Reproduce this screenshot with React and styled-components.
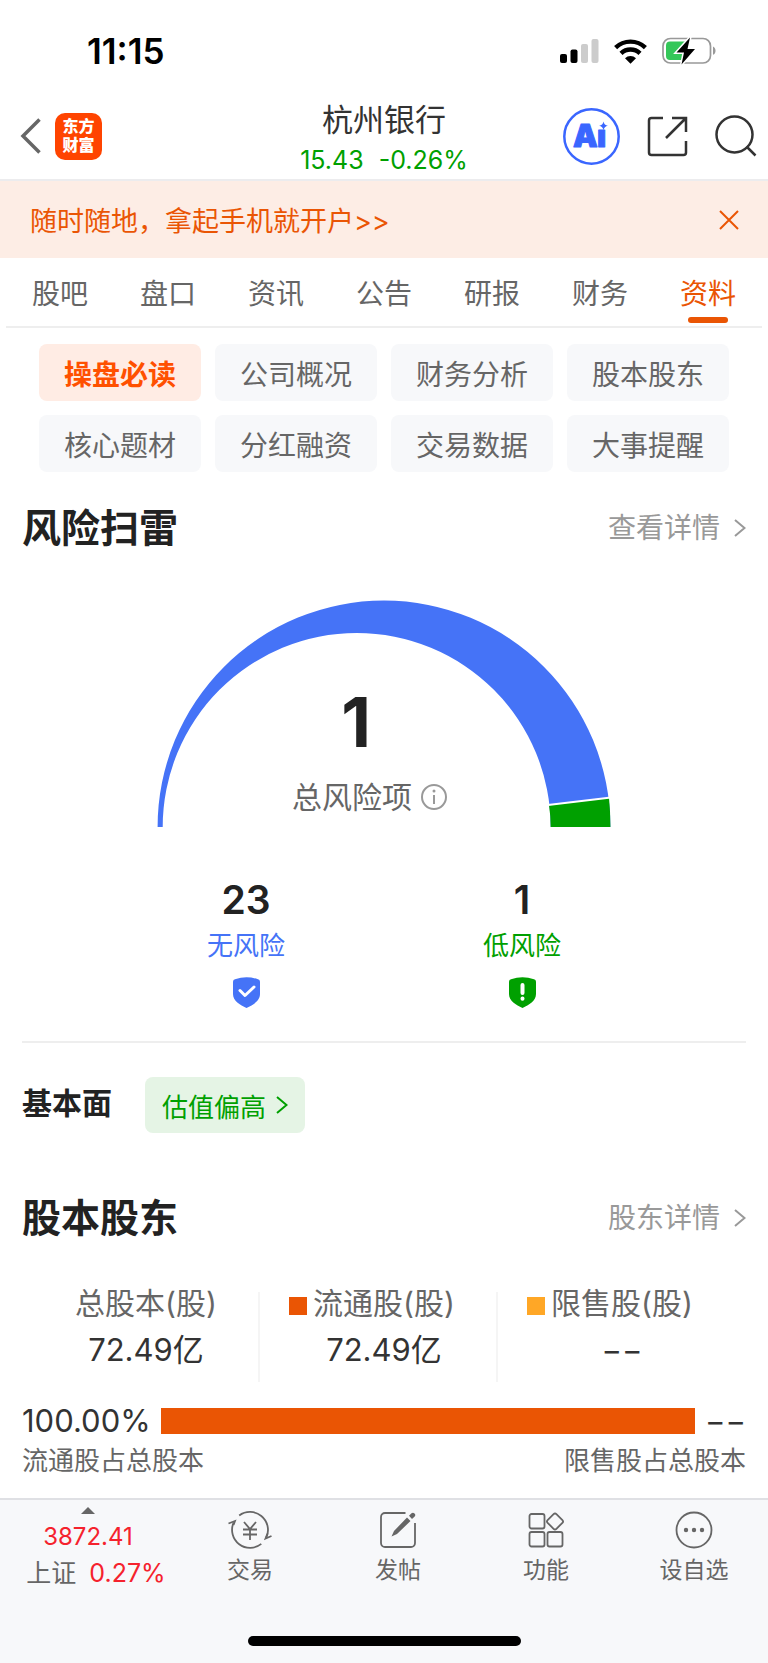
import styled, { createGlobalStyle } from "styled-components";

const GlobalStyle = createGlobalStyle`
  * {
    box-sizing: border-box;
  }

  body {
    margin: 0;
    background-color: white;
    color: #222;
    font-family: Inter, "Noto Sans CJK SC", sans-serif;
  }

  button {
    border: none;
    padding: 0;
    background: none;
    color: inherit;
    font: inherit;
    cursor: pointer;
  }

  a {
    color: inherit;
    text-decoration: none;
  }

  h1, h2, h3, p {
    margin: 0;
  }

  svg {
    display: block;
    flex: none;
  }
`;

const Page = styled.div`
  display: flex;
  flex-direction: column;
  min-height: 100vh;
`;

const StatusBar = styled.div`
  display: flex;
  align-items: center;
  justify-content: space-between;
  height: 92px;
  padding: 10px 52px 0 87px;
  color: black;
`;

const Time = styled.span`
  font-size: 35px;
  font-weight: 600;
`;

const StatusIcons = styled.div`
  display: flex;
  align-items: center;
  gap: 15px;
`;

const NavBar = styled.header`
  display: grid;
  grid-template-columns: 1fr auto 1fr;
  align-items: center;
  height: 89px;
  padding: 0 11px 0 20px;
  border-bottom: 2px solid #ececee;
`;

const NavLeft = styled.div`
  display: flex;
  align-items: center;
  gap: 14px;
`;

const NavRight = styled.div`
  display: flex;
  align-items: center;
  justify-content: flex-end;
  gap: 27px;
`;

const Logo = styled.a`
  display: flex;
  flex-direction: column;
  align-items: center;
  justify-content: center;
  width: 47px;
  height: 47px;
  border-radius: 10px;
  background-color: #ff4400;
  color: white;
  font-size: 16px;
  font-weight: 900;
  line-height: 19px;
`;

const StockTitle = styled.div`
  padding: 8px 9px 0 0;
  text-align: center;
`;

const StockName = styled.h1`
  color: #333;
  font-size: 31px;
  font-weight: 400;
  line-height: 40px;
`;

const StockPrice = styled.p`
  display: flex;
  gap: 15px;
  color: #00a000;
  font-size: 25px;
  line-height: 40px;
`;

const Banner = styled.div`
  display: flex;
  align-items: center;
  justify-content: space-between;
  height: 77px;
  padding: 0 29px 0 30px;
  background-color: #fdede5;
  color: #ea5504;
  font-size: 27px;
`;

const Tabs = styled.nav`
  display: flex;
  margin: 0 6px;
  border-bottom: 2px solid #eee;
`;

const Tab = styled.a`
  position: relative;
  flex: 1;
  padding-top: 4px;
  color: ${(props) => (props.$active ? "#ea5504" : "#666")};
  font-size: 28px;
  line-height: 64px;
  text-align: center;

  &::after {
    content: "";
    display: ${(props) => (props.$active ? "block" : "none")};
    position: absolute;
    bottom: 3px;
    left: 50%;
    width: 40px;
    height: 6px;
    margin-left: -20px;
    border-radius: 3px;
    background-color: #ea5504;
  }
`;

const Chips = styled.div`
  display: grid;
  grid-template-columns: repeat(4, 1fr);
  gap: 14px;
  padding: 16px 39px 0;
`;

const Chip = styled.button`
  height: 57px;
  border-radius: 8px;
  background-color: ${(props) => (props.$active ? "#ffece4" : "#f7f8fa")};
  color: ${(props) => (props.$active ? "#ff5000" : "#666")};
  font-size: 28px;
  font-weight: ${(props) => (props.$active ? 700 : 400)};
`;

const Section = styled.section`
  padding: 0 22px;
`;

const SectionHead = styled.div`
  display: flex;
  align-items: center;
  justify-content: space-between;
  margin-top: ${(props) => props.$top}px;
  line-height: 56px;
`;

const SectionTitle = styled.h2`
  font-size: 39px;
  font-weight: 700;
`;

const More = styled.a`
  display: flex;
  align-items: center;
  gap: 14px;
  color: #999;
  font-size: 28px;
`;

const Gauge = styled.div`
  position: relative;
  width: 454px;
  margin: 44px auto 0;
`;

const GaugeLabel = styled.div`
  position: absolute;
  top: 82px;
  left: 135px;
  display: grid;
  grid-template-columns: auto auto;
  align-items: center;
  column-gap: 9px;
`;

const GaugeValue = styled.strong`
  grid-column: 1 / 2;
  padding-left: 8px;
  font-size: 69px;
  font-weight: 700;
  line-height: 80px;
  text-align: center;
`;

const GaugeText = styled.span`
  grid-row: 2;
  color: #666;
  font-size: 30px;
  line-height: 70px;
`;

const InfoButton = styled.button`
  grid-row: 2;
  color: #999;
`;

const Stats = styled.div`
  display: flex;
  justify-content: center;
  margin-top: 50px;
  padding-bottom: 33px;
  border-bottom: 2px solid #eee;
`;

const Stat = styled.div`
  display: flex;
  flex-direction: column;
  align-items: center;
  width: 276px;
  line-height: 46px;

  svg {
    margin-top: 8px;
  }
`;

const StatValue = styled.strong`
  font-size: 39px;
  font-weight: 600;
`;

const StatLabel = styled.span`
  color: ${(props) => props.color};
  font-size: 26px;
`;

const Basics = styled.div`
  display: flex;
  align-items: center;
  gap: 33px;
  margin-top: 34px;
`;

const BasicsTitle = styled.h3`
  font-size: 30px;
  font-weight: 700;
  line-height: 52px;
  padding-bottom: 4px;
`;

const Valuation = styled.button`
  display: flex;
  align-items: center;
  gap: 10px;
  height: 56px;
  padding: 0 17px;
  border-radius: 8px;
  background-color: #e5f4e5;
  color: #00a000;
  font-size: 26px;
`;

const Shares = styled.dl`
  display: flex;
  margin: 34px 5px 0;
`;

const Share = styled.div`
  position: relative;
  flex: 1;
  height: 102px;
  line-height: 46px;
  text-align: center;

  & + &::before {
    content: "";
    position: absolute;
    top: 12px;
    bottom: 0;
    left: -7px;
    width: 2px;
    background-color: #f5f5f5;
  }
`;

const ShareLabel = styled.dt`
  color: #666;
  font-size: 30px;

  span {
    position: relative;
  }
`;

const Swatch = styled.i`
  position: absolute;
  top: 12px;
  right: 100%;
  width: 18px;
  height: 18px;
  margin-right: 6px;
  background-color: ${(props) => props.color};
`;

const ShareValue = styled.dd`
  margin: 0;
  color: #333;
  font-size: 31px;
  line-height: 48px;
`;

const Ratio = styled.div`
  display: flex;
  align-items: center;
  gap: 10px;
  margin-top: 16px;
  color: #333;
  font-size: 31px;
  line-height: 46px;
`;

const RatioBar = styled.div`
  flex: 1;
  height: 26px;
  background-color: #ea5504;
`;

const RatioLegend = styled.div`
  display: flex;
  justify-content: space-between;
  margin-bottom: 20px;
  color: #666;
  font-size: 26px;
  line-height: 34px;
`;

const BottomBar = styled.footer`
  margin-top: auto;
  padding-bottom: 17px;
  border-top: 2px solid #dfe0e4;
  background-color: #f7f8fa;
`;

const BottomItems = styled.div`
  display: flex;
`;

const Index = styled.button`
  display: flex;
  flex-direction: column;
  align-items: center;
  width: 176px;
  padding-top: 7px;
  color: #666;
  font-size: 24px;
  line-height: 36px;
`;

const IndexValue = styled.span`
  padding-top: 5px;
  color: #f5222d;
`;

const IndexChange = styled.span`
  display: flex;
  gap: 13px;
  padding-left: 16px;
  font-size: 25px;

  b {
    color: #f5222d;
    font-weight: 400;
  }
`;

const BottomItem = styled.button`
  display: flex;
  flex: 1;
  flex-direction: column;
  align-items: center;
  gap: 3px;
  padding-top: 11px;
  color: #666;
  font-size: 23px;
  line-height: 36px;
`;

const HomeIndicator = styled.div`
  width: 273px;
  height: 10px;
  margin: 45px auto 0;
  border-radius: 5px;
  background-color: black;
`;

const tabs = ["股吧", "盘口", "资讯", "公告", "研报", "财务", "资料"];

const chips = [
  "操盘必读",
  "公司概况",
  "财务分析",
  "股本股东",
  "核心题材",
  "分红融资",
  "交易数据",
  "大事提醒",
];

const shares = [
  { label: "总股本(股)", value: "72.49亿" },
  { label: "流通股(股)", value: "72.49亿", color: "#ea5504" },
  { label: "限售股(股)", value: "−−", color: "#ffa726" },
];

function Signal() {
  return (
    <svg width="39" height="25" viewBox="0 0 39 25">
      <rect x="0" y="15" width="7" height="9" rx="2" />
      <rect x="10.5" y="10.5" width="7" height="13.5" rx="2" />
      <rect x="21" y="5" width="7" height="19" rx="2" fill="#ccc" />
      <rect x="31.5" y="0" width="7" height="24" rx="2" fill="#ccc" />
    </svg>
  );
}

function Wifi() {
  return (
    <svg width="33" height="25" viewBox="0 0 33 25">
      <g fill="none" stroke="black" strokeWidth="4.4">
        <path d="M1.6 8.6a21.5 21.5 0 0 1 29.8 0" />
        <path d="M7 14.4a13.6 13.6 0 0 1 19 0" />
      </g>
      <path d="M11 19.2a8 8 0 0 1 11 0L16.5 24.7z" />
    </svg>
  );
}

function Battery() {
  return (
    <svg width="54" height="28" viewBox="0 0 54 28">
      <rect x="1" y="1.5" width="47.5" height="24.5" rx="7.5" fill="none" stroke="#999" strokeWidth="1.7" />
      <path d="M51 9.5c3.4 1.6 3.4 6.7 0 8.3z" fill="#999" />
      <path d="M8 4.500h17v18.500H8a4 4 0 0 1-4-4V8.500a4 4 0 0 1 4-4z" fill="#34c759" />
      <path
        d="M28 .5L14.5 15.5h7.5L19.5 27.5 33 12h-7.5z"
        stroke="white"
        strokeWidth="3"
        paintOrder="stroke"
      />
    </svg>
  );
}

function Chevron() {
  return (
    <svg width="12" height="18" viewBox="0 0 12 18" fill="none" stroke="currentColor" strokeWidth="2">
      <path d="M1 1l9.5 8L1 17" />
    </svg>
  );
}

function AiIcon() {
  return (
    <svg width="57" height="57" viewBox="0 0 57 57" fill="#3a66ff">
      <circle cx="28.5" cy="28.5" r="27.2" fill="none" stroke="#3a66ff" strokeWidth="2.5" />
      <g fontFamily="Inter, sans-serif" fontSize="31" fontWeight="900" stroke="#3a66ff" strokeLinejoin="round">
        <text x="10" y="39">A</text>
        <text x="34" y="39">ı</text>
      </g>
      <path d="M40.5 13.5q.8 3.700 4.300 4.300-3.500.7-4.300 4.300-.8-3.600-4.300-4.300 3.500-.6 4.300-4.300z" />
    </svg>
  );
}

function ShareIcon() {
  return (
    <svg width="41" height="41" viewBox="0 0 41 41" fill="none" stroke="#333" strokeWidth="2.5">
      <path d="M16 2H4.500A2.500 2.500 0 0 0 2 4.500v32A2.500 2.500 0 0 0 4.500 39h32a2.500 2.500 0 0 0 2.500-2.500V25" />
      <path d="M25 2h14v14M39 2L19 22" />
    </svg>
  );
}

function SearchIcon() {
  return (
    <svg width="42" height="42" viewBox="0 0 42 42" fill="none" stroke="#333" strokeWidth="2.5">
      <circle cx="19.5" cy="19.5" r="18" />
      <path d="M31.5 31.5l9 9" />
    </svg>
  );
}

function GaugeChart() {
  return (
    <svg width="454" height="227" viewBox="0 0 454 227">
      <path d="M.6 227A226.4 226.4 0 0 1 453.4 227H393.7A194 194 0 0 0 5.7 227z" fill="#4573f7" />
      <path d="M392 205.3L452 198q1.4 14 1.4 29H393.7q0-11-1.7-21.7z" fill="#00a000" />
      <path d="M391 205.1L454 197.6" stroke="white" strokeWidth="2" />
    </svg>
  );
}

function InfoIcon() {
  return (
    <svg width="26" height="26" viewBox="0 0 26 26" fill="none" stroke="currentColor" strokeWidth="2">
      <circle cx="13" cy="13" r="12" />
      <path d="M13 11v9" />
      <circle cx="13" cy="7" r="1.5" fill="currentColor" stroke="none" />
    </svg>
  );
}

function Shield({ color, children }) {
  return (
    <svg width="27" height="31" viewBox="0 0 27 31">
      <path d="M2 2.3Q13.5-1.8 25 2.3a2.5 2.5 0 0 1 2 2.5V17c0 7-7 11-13.5 14C7 28 0 24 0 17V4.8a2.5 2.5 0 0 1 2-2.5z" fill={color} />
      <g fill="none" stroke="white" strokeWidth="3" strokeLinecap="round" strokeLinejoin="round">
        {children}
      </g>
    </svg>
  );
}

function TradeIcon() {
  return (
    <svg width="44" height="38" viewBox="0 0 44 38" fill="none" stroke="currentColor" strokeWidth="1.8">
      <path d="M11.2 4.5A18 18 0 0 1 38.300 26.500M33.300 32.900A18 18 0 0 1 5.500 11.800" />
      <path d="M.5 12.500l6.500-2.500-1.500 4M43.500 25l-6 2.500 2-5" />
      <path d="M16 11l6 7 6-7M22 18v11M15 18.500h14M15 23.500h14" />
    </svg>
  );
}

function PostIcon() {
  return (
    <svg width="38" height="38" viewBox="0 0 38 38" fill="none" stroke="currentColor" strokeWidth="1.8">
      <path d="M26.5 2H6a4 4 0 0 0-4 4v26a4 4 0 0 0 4 4h26a4 4 0 0 0 4-4V12" />
      <path d="M28 6.5l3.5 3.5L18 23l-5.500 2.500L15 20zM30 4.800l2.500-2.500q1.500-1.300 3 .2t.2 3L33 8z" fill="currentColor" stroke="none" />
    </svg>
  );
}

function AppsIcon() {
  return (
    <svg width="36" height="38" viewBox="0 0 36 38" fill="none" stroke="currentColor" strokeWidth="1.8">
      <rect x="1.5" y="3" width="15" height="14.5" rx="2" />
      <rect x="1.5" y="21" width="15" height="14.5" rx="2" />
      <rect x="19.5" y="21" width="15" height="14.5" rx="2" />
      <path d="M25.6 3.2q1.4-1.4 2.8 0l6 6q1.3 1.3 0 2.6l-6 6q-1.4 1.4-2.8 0l-6-6q-1.3-1.3 0-2.6z" />
    </svg>
  );
}

function DotsIcon() {
  return (
    <svg width="38" height="38" viewBox="0 0 38 38" fill="currentColor">
      <circle cx="19" cy="19" r="17.5" fill="none" stroke="currentColor" strokeWidth="1.8" />
      <circle cx="11" cy="19" r="2.2" />
      <circle cx="19" cy="19" r="2.2" />
      <circle cx="27" cy="19" r="2.2" />
    </svg>
  );
}

const actions = [
  { label: "交易", Icon: TradeIcon },
  { label: "发帖", Icon: PostIcon },
  { label: "功能", Icon: AppsIcon },
  { label: "设自选", Icon: DotsIcon },
];

export default function App() {
  return (
    <Page>
      <GlobalStyle />
      <StatusBar>
        <Time>11:15</Time>
        <StatusIcons>
          <Signal />
          <Wifi />
          <Battery />
        </StatusIcons>
      </StatusBar>

      <NavBar>
        <NavLeft>
          <button aria-label="返回">
            <svg width="21" height="36" viewBox="0 0 21 36" fill="none" stroke="#666" strokeWidth="3.5">
              <path d="M19.5 1.5L3 18l16.5 16.5" />
            </svg>
          </button>
          <Logo href="#">
            <span>东方</span>
            <span>财富</span>
          </Logo>
        </NavLeft>
        <StockTitle>
          <StockName>杭州银行</StockName>
          <StockPrice>
            <span>15.43</span>
            <span>-0.26%</span>
          </StockPrice>
        </StockTitle>
        <NavRight>
          <button aria-label="Ai">
            <AiIcon />
          </button>
          <button aria-label="分享">
            <ShareIcon />
          </button>
          <button aria-label="搜索">
            <SearchIcon />
          </button>
        </NavRight>
      </NavBar>

      <Banner>
        <a href="#">随时随地，拿起手机就开户&gt;&gt;</a>
        <button aria-label="关闭">
          <svg width="20" height="20" viewBox="0 0 20 20" stroke="#ea5504" strokeWidth="2">
            <path d="M1 1l18 18M19 1L1 19" />
          </svg>
        </button>
      </Banner>

      <Tabs>
        {tabs.map((tab) => (
          <Tab key={tab} href="#" $active={tab === "资料"}>
            {tab}
          </Tab>
        ))}
      </Tabs>

      <Chips>
        {chips.map((chip) => (
          <Chip key={chip} $active={chip === "操盘必读"}>
            {chip}
          </Chip>
        ))}
      </Chips>

      <Section>
        <SectionHead $top={28}>
          <SectionTitle>风险扫雷</SectionTitle>
          <More href="#">
            查看详情
            <Chevron />
          </More>
        </SectionHead>
        <Gauge>
          <GaugeChart />
          <GaugeLabel>
            <GaugeValue>1</GaugeValue>
            <GaugeText>总风险项</GaugeText>
            <InfoButton aria-label="说明">
              <InfoIcon />
            </InfoButton>
          </GaugeLabel>
        </Gauge>
        <Stats>
          <Stat>
            <StatValue>23</StatValue>
            <StatLabel color="#4573f7">无风险</StatLabel>
            <Shield color="#4573f7">
              <path d="M7 13.5l5 5 9-8.5" />
            </Shield>
          </Stat>
          <Stat>
            <StatValue>1</StatValue>
            <StatLabel color="#00a000">低风险</StatLabel>
            <Shield color="#00a000">
              <path d="M13.5 8v8M13.5 21.5v.2" strokeWidth="4" />
            </Shield>
          </Stat>
        </Stats>
        <Basics>
          <BasicsTitle>基本面</BasicsTitle>
          <Valuation>
            估值偏高
            <Chevron />
          </Valuation>
        </Basics>
      </Section>

      <Section>
        <SectionHead $top={57}>
          <SectionTitle>股本股东</SectionTitle>
          <More href="#">
            股东详情
            <Chevron />
          </More>
        </SectionHead>
        <Shares>
          {shares.map((share) => (
            <Share key={share.label}>
              <ShareLabel>
                <span>
                  {share.color && <Swatch color={share.color} />}
                  {share.label}
                </span>
              </ShareLabel>
              <ShareValue>{share.value}</ShareValue>
            </Share>
          ))}
        </Shares>
        <Ratio>
          <span>100.00%</span>
          <RatioBar />
          <span>−−</span>
        </Ratio>
        <RatioLegend>
          <span>流通股占总股本</span>
          <span>限售股占总股本</span>
        </RatioLegend>
      </Section>

      <BottomBar>
        <BottomItems>
          <Index>
            <svg width="14" height="7" viewBox="0 0 14 7" fill="currentColor">
              <path d="M7 0l7 7H0z" />
            </svg>
            <IndexValue>3872.41</IndexValue>
            <IndexChange>
              上证 <b>0.27%</b>
            </IndexChange>
          </Index>
          {actions.map(({ label, Icon }) => (
            <BottomItem key={label}>
              <Icon />
              {label}
            </BottomItem>
          ))}
        </BottomItems>
        <HomeIndicator />
      </BottomBar>
    </Page>
  );
}
